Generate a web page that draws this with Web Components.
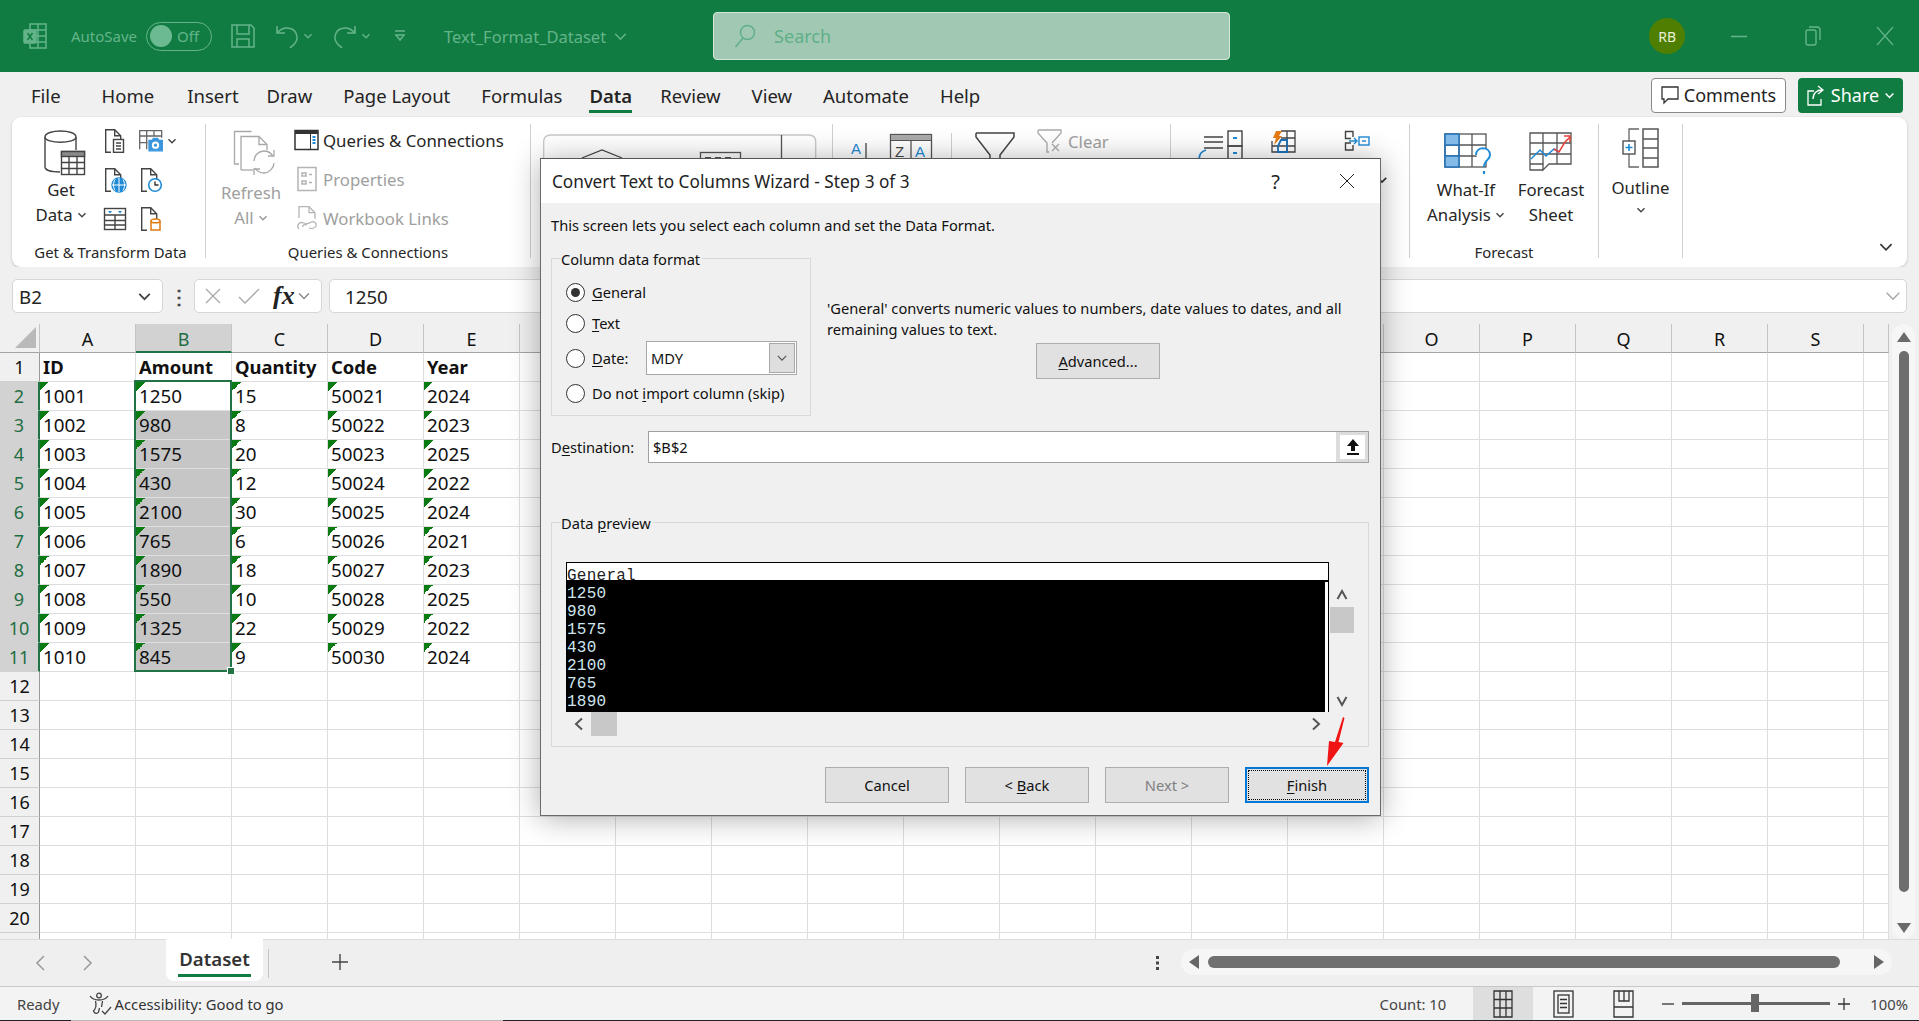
<!DOCTYPE html>
<html lang="en">
<head>
<meta charset="utf-8">
<title>Text_Format_Dataset - Excel</title>
<style>
  html, body { margin: 0; height: 100%; overflow: hidden; }
  body { font-family: "Noto Sans", "Open Sans", sans-serif; color: #242424; background: #f0f0f0; }
  #app { position: relative; display: flex; flex-direction: column; height: 1021px; width: 1919px; overflow: hidden; }
</style>
</head>
<body>
<div id="app">
  <xl-titlebar></xl-titlebar>
  <xl-tabs></xl-tabs>
  <xl-ribbon></xl-ribbon>
  <xl-formula-bar></xl-formula-bar>
  <xl-sheet></xl-sheet>
  <xl-sheet-tabs></xl-sheet-tabs>
  <xl-status-bar></xl-status-bar>
  <xl-wizard></xl-wizard>
</div>

<script>
// small helpers for the ribbon icons
const chev = (size = 10, color = '#444', sw = 1.4) =>
  `<svg width="${size}" height="${size}" viewBox="0 0 10 10" fill="none" stroke="${color}" stroke-width="${sw}"><path d="M1.5 3.2 5 6.8l3.5-3.6"/></svg>`;

const doc = (extra = '', stroke = '#444') =>
  `<svg width="26" height="26" viewBox="0 0 26 26" fill="none" stroke="${stroke}" stroke-width="1.4"><path d="M9 24.3H3.7V1.7h9l6 6v6"/><path d="M12.7 1.7v6h6"/>${extra}</svg>`;

const icons = {
  getData: `<svg style="margin-left:8px" width="42" height="46" viewBox="0 0 42 46" fill="none" stroke="#444" stroke-width="1.4">
    <path d="M1 7c0-8 31-8 31 0v13"/><path d="M1 7c0 7 31 7 31 0"/><path d="M1 7v30c0 3 6 5 15 5"/>
    <rect x="17.5" y="21.5" width="23" height="23" fill="#fff"/><rect x="17.5" y="21.5" width="23" height="5" fill="#8a8a8a"/>
    <path d="M17.5 32.5h23M17.5 38.5h23M25 26.5v18M33 26.5v18"/></svg>`,
  fromText: doc('<rect x="11.5" y="11.5" width="10" height="12.8" fill="#fff"/><path d="M14 15h5M14 18h5M14 21h5"/>'),
  fromPic: `<svg width="26" height="26" viewBox="0 0 26 26" fill="none" stroke="#666" stroke-width="1.3"><path d="M1.7 21.3V2.7h22v7M1.7 8h22M1.7 14.6h8M8.7 2.7v18.6M16 2.7v6"/><path d="M11 22.8V12.5h3l1.5-2h4l1.5 2h3.3v10.3z" fill="#3a96dd" stroke="#3a96dd"/><circle cx="17.5" cy="17.2" r="3" fill="#fff" stroke="#fff"/><circle cx="17.5" cy="17.2" r="1.6" fill="#3a96dd" stroke="none"/></svg>`,
  fromWeb: doc('<circle cx="17" cy="18" r="7" fill="#1f8ad6" stroke="#1f8ad6"/><path d="M10 18h14M17 11v14M13 12.5c-2 3.5-2 7.5 0 11M21 12.5c2 3.5 2 7.5 0 11" stroke="#fff" stroke-width="1"/>'),
  recent: doc('<circle cx="17" cy="18" r="6.3" fill="#fff" stroke="#1f8ad6" stroke-width="1.6"/><path d="M17 14.5V18h3.5" stroke="#333"/>'),
  fromTable: `<svg width="26" height="26" viewBox="0 0 26 26" fill="none" stroke="#444" stroke-width="1.4"><rect x="2.5" y="2.5" width="21" height="21" fill="#fff"/><path d="M2.5 9h21M2.5 14.5h21M2.5 19h21M13 9v14.5"/><path d="M6 5h4l-2 2.5zM16 5h4l-2 2.5z" fill="#1f8ad6" stroke="none"/></svg>`,
  existing: doc('<path d="M13 15c0-2.6 9-2.6 9 0v9h-9z" fill="#fff" stroke="#e07a10" stroke-width="1.5"/><path d="M13 15c0 2.4 9 2.4 9 0" stroke="#e07a10" stroke-width="1.5"/>'),
  refresh: `<svg style="margin:0 0 3px 8px" width="44" height="48" viewBox="0 0 44 48" fill="none" stroke="#a8a8a8" stroke-width="1.3"><path d="M6 34H1.5V1.5h17"/><path d="M8 40V6.5h18l8 8V20M26 6.5v8h8"/><path d="M8 40h12"/><path d="M21 31c0-6 5-10 10-10 4 0 7 2 9 5M41 33c0 5-5 10-10 10-4 0-7-2-9-5"/><path d="M41 20v6h-6M21 45v-6h6"/></svg>`,
  queries: `<svg width="26" height="26" viewBox="0 0 26 26"><rect x="1" y="3.5" width="23" height="19" fill="#fff" stroke="#333" stroke-width="1.5"/><rect x="1" y="3.5" width="23" height="3.5" fill="#333"/><path d="M16.5 7v15" stroke="#333" stroke-width="1"/><path d="M18.5 10h3M18.5 13h3M18.5 16h3" stroke="#1f8ad6" stroke-width="1.8"/></svg>`,
  props: `<svg width="26" height="26" viewBox="0 0 26 26" fill="none" stroke="#b4b4b4" stroke-width="1.5"><rect x="4" y="1.5" width="18" height="23"/><rect x="8" y="7" width="4" height="3"/><rect x="8" y="15" width="4" height="3"/><path d="M15 8.5h3M15 16.5h3"/></svg>`,
  links: `<svg width="26" height="26" viewBox="0 0 26 26" fill="none" stroke="#b4b4b4" stroke-width="1.3"><path d="M5 13V1.7h10l6 6v6"/><path d="M15 1.7v6h6"/><path d="M5 24c-3-3 0-8 5-6 3 1 6 0 7-1 3-1 6 1 5 4-1 2-4 3-7 2M9 22c-1-2 2-3 4-2"/></svg>`,
  gallery: `<svg width="274" height="30" viewBox="0 0 274 30" fill="none" stroke="#555" stroke-width="1.3"><path d="M.7 30V8q0-7 7-7h258q7 0 7 7v22" stroke="#c8c8c8"/><path d="M238.5 1v29" stroke="#555"/><path d="M39 24l20-8 20 8" stroke="#444"/><rect x="157.5" y="18.5" width="40" height="12"/><path d="M162 24h6M172 24h6M182 24h6" stroke-width="2"/></svg>`,
  sort: `<svg width="105" height="30" viewBox="0 0 105 30" fill="none"><text x="20" y="23" fill="#1f8ad6" font-size="15" font-family="Liberation Sans">A</text><path d="M35 12v18" stroke="#444" stroke-width="1.3"/><rect x="59.5" y="3.5" width="41" height="30" stroke="#555" stroke-width="1.3"/><rect x="59.5" y="3.5" width="41" height="6" fill="#aaa" stroke="#555"/><path d="M80 9.5v21" stroke="#555" stroke-width="1.3"/><text x="64" y="26" fill="#444" font-size="15" font-family="Liberation Sans">Z</text><text x="84" y="26" fill="#1f8ad6" font-size="15" font-family="Liberation Sans">A</text></svg>`,
  funnel: `<svg width="42" height="30" viewBox="0 0 42 30" fill="none" stroke="#444" stroke-width="1.5"><path d="M1 2h38v4L25 24v6M1 2v4l14 18v6"/></svg>`,
  clear: `<svg width="26" height="24" viewBox="0 0 26 24" fill="none" stroke="#aaa" stroke-width="1.3"><path d="M1 1h23v3l-9 10M1 1v3l9 10v9h2"/><path d="M15 15l7 7M22 15l-7 7"/></svg>`,
  flash: `<svg width="46" height="30" viewBox="0 0 46 30" fill="none" stroke="#444" stroke-width="1.4"><path d="M6 7h19M6 12h19M6 18h19"/><path d="M1 30c0-6 3-9 7-10" stroke="#1f8ad6" stroke-width="1.8"/><rect x="30" y="1" width="14" height="15"/><rect x="30" y="16" width="14" height="14"/><path d="M35 8h4M35 23h4" stroke="#1f8ad6" stroke-width="1.8"/></svg>`,
  fill: `<svg width="26" height="24" viewBox="0 0 26 24" fill="none" stroke="#444" stroke-width="1.3"><path d="M10 1h14v21H1V11M1 16h23M16 1v21M10 8h14"/><path d="M10 10h6v12H7v-6z" stroke="#1f72b8" stroke-width="1.8"/><path d="M5 1h6L8 6h3l-8 9 2-7H2z" fill="#e57a10" stroke="none"/></svg>`,
  relations: `<svg width="26" height="22" viewBox="0 0 26 22" fill="none" stroke="#444" stroke-width="1.4"><path d="M9 7V1.5H1.5v7H7M7 13H1.5v7H9v-5"/><path d="M5 11h8M10 8l3 3-3 3" stroke="#1f8ad6"/><rect x="15" y="7" width="10" height="8" stroke="#1f8ad6"/><path d="M18 11h4" stroke="#1f8ad6"/></svg>`,
  whatif: `<svg style="margin:3px 0 1px 6px" width="50" height="44" viewBox="0 0 50 44" fill="none" stroke="#555" stroke-width="1.3"><rect x="1" y="1" width="41" height="33" fill="#fff"/><path d="M15 1v33M28 1v33M1 12h41M1 23h41"/><rect x="1" y="1" width="14" height="11" fill="#84bbe6" stroke="#1f72b8" stroke-width="1.5"/><rect x="1" y="23" width="14" height="11" fill="#84bbe6" stroke="#1f72b8" stroke-width="1.5"/><path d="M1 12v11M15 12v11" stroke="#1f72b8" stroke-width="1.5"/><path d="M32 22c0-9 14-9 14 0 0 5-6 5-6 12" fill="#fff" stroke="#1f8ad6" stroke-width="2"/><path d="M40 38v3" stroke="#1f8ad6" stroke-width="2.2"/></svg>`,
  forecast: `<svg style="margin-top:2px" width="44" height="40" viewBox="0 0 44 40" fill="none" stroke="#555" stroke-width="1.3"><path d="M14 38H1V1h41v31H20l-6 6v-6H1"/><path d="M1 11h41M1 22h41M14 1v31M28 1v31"/><path d="M2 27l9-9 6 6 8-7 5 3" stroke="#1f8ad6" stroke-width="1.5"/><path d="M25 17l5 3 6-10 5-5" stroke="#e8403a" stroke-width="1.5"/><path d="M35 4h6v6" stroke="#e8403a" stroke-width="1.5"/></svg>`,
  outline: `<svg width="38" height="40" viewBox="0 0 38 40" fill="none" stroke="#666" stroke-width="1.3"><rect x="21" y="1" width="15" height="38" stroke-width="1.5" stroke="#555"/><path d="M21 11h15M21 20h15M21 30h15" stroke="#555"/><path d="M17 1H7v12M7 26v13h10"/><rect x="1" y="13" width="12" height="13" fill="#fff" stroke="#444"/><path d="M3.5 19.5h7M7 16v7" stroke="#1f8ad6" stroke-width="1.6"/></svg>`
};

class XlTitlebar extends HTMLElement {
  constructor() {
    super();
    this.attachShadow({ mode: 'open' });
    this.shadowRoot.innerHTML = `
      <style>
        :host { display: flex; align-items: center; height: 72px; flex: none; background: #107c41; color: #64b48b; }
        svg { display: block; flex: none; }
        .t { font-size: 15px; }
        .logo { margin-left: 23px; }
        .auto { margin-left: 24px; }
        .toggle { display: flex; align-items: center; gap: 5px; margin-left: 9px; width: 66px; height: 29px; box-sizing: border-box; border: 1px solid #64b48b; border-radius: 15px; padding-left: 3px; font-size: 15px; }
        .knob { width: 22px; height: 22px; border-radius: 50%; background: #6cba92; }
        .save { margin-left: 19px; }
        .file { display: flex; align-items: center; gap: 7px; margin-left: 37px; font-size: 16.5px; }
        .search { display: flex; align-items: center; gap: 18px; margin-left: 85px; width: 517px; height: 48px; box-sizing: border-box; padding-left: 20px; background: #a1c8b3; border: 1px solid #d6e6dc; border-radius: 4px; color: #5fb088; font-size: 18px; }
        .avatar { display: flex; align-items: center; justify-content: center; margin-left: 419px; width: 36px; height: 36px; border-radius: 50%; background: #4f7f00; color: #e9efd8; font-size: 14px; }
      </style>
      <svg class="logo" width="24" height="26" viewBox="0 0 24 26" fill="none" stroke="#64b48b" stroke-width="1.5"><path d="M7 7V1h16v24H7v-5M7 7h16M15 1v24M8 13h15M8 19h15"/><rect x="1" y="7" width="12" height="13" rx="1" fill="#64b48b"/><path d="M4.5 10l5 7M9.5 10l-5 7" stroke="#107c41"/></svg>
      <span class="t auto">AutoSave</span>
      <div class="toggle"><span class="knob"></span><span>Off</span></div>
      <svg class="save" width="24" height="24" viewBox="0 0 24 24" fill="none" stroke="#64b48b" stroke-width="1.5"><path d="M1 1h19l3 3v19H1zM6 1v9h12V1M6 23v-8h12v8"/></svg>
      <svg style="margin-left:20px" width="24" height="24" viewBox="0 0 24 24" fill="none" stroke="#64b48b" stroke-width="1.5"><path d="M2 9c7-8 19-6 20 4 .5 6-4 8-7 11M2 2v7h8"/></svg>
      <span style="margin-left:4px">${chev(10, '#64b48b')}</span>
      <svg style="margin-left:20px" width="24" height="24" viewBox="0 0 24 24" fill="none" stroke="#64b48b" stroke-width="1.5"><path d="M22 9C15 1 3 3 2 13c-.5 6 4 8 7 11M22 2v7h-8"/></svg>
      <span style="margin-left:4px">${chev(10, '#64b48b')}</span>
      <svg style="margin-left:22px" width="14" height="14" viewBox="0 0 14 14" fill="none" stroke="#64b48b" stroke-width="1.5"><path d="M2 2h10M3 6l4 5 4-5z"/></svg>
      <div class="file"><span>Text_Format_Dataset</span>${chev(15, '#64b48b', 1)}</div>
      <div class="search">
        <svg width="22" height="24" viewBox="0 0 22 24" fill="none" stroke="#5fb088" stroke-width="1.5"><circle cx="13.5" cy="8.5" r="7"/><path d="M9 14 1.5 23"/></svg>
        <span>Search</span>
      </div>
      <div class="avatar">RB</div>
      <svg style="margin-left:46px" width="16" height="3" viewBox="0 0 16 3" fill="none" stroke="#64b48b" stroke-width="1.5"><path d="M0 1.5h16"/></svg>
      <svg style="margin-left:58px" width="16" height="22" viewBox="0 0 16 22" fill="none" stroke="#64b48b" stroke-width="1.4"><rect x="1" y="5" width="10" height="15" rx="2"/><path d="M4 2h8q3 0 3 3v10"/></svg>
      <svg style="margin-left:55px" width="18" height="20" viewBox="0 0 18 20" fill="none" stroke="#64b48b" stroke-width="1.2"><path d="M1 1l16 18M17 1 1 19"/></svg>
    `;
  }
}

class XlTabs extends HTMLElement {
  constructor() {
    super();
    this.attachShadow({ mode: 'open' });
    // small per-tab nudges: the original's text widths are not quite those of this font
    const nudge = { Home: 'margin-left:1px;margin-right:2px', Draw: 'margin-left:-3px', Data: 'margin-left:-4px', Review: 'margin-left:-3px' };
    const names = ['File', 'Home', 'Insert', 'Draw', 'Page Layout', 'Formulas', 'Data', 'Review', 'View', 'Automate', 'Help'];
    this.shadowRoot.innerHTML = `
      <style>
        :host { display: flex; align-items: center; height: 45px; flex: none; background: #f0f0f0; padding: 0 16px 0 31px; box-sizing: border-box; font-size: 18.5px; color: #242424; }
        .tabs { display: flex; gap: 31px; flex: 1; }
        .tab { position: relative; line-height: 30px; padding-top: 2px; }
        .tab:first-child { margin-right: 9px; }
        .on { font-weight: 600; }
        .on::after { content: ""; position: absolute; left: 0; right: 0; bottom: -2px; height: 3px; background: #107c41; }
        .btn { display: flex; align-items: center; justify-content: center; gap: 5px; box-sizing: border-box; height: 35px; border-radius: 4px; font-size: 18px; margin-top: 1px; }
        .comments { width: 135px; background: #fff; border: 1px solid #8a8a8a; }
        .share { width: 105px; margin-left: 12px; background: #107c41; color: #fff; }
      </style>
      <div class="tabs">${names.map(n => `<span class="tab ${n === 'Data' ? 'on' : ''}" style="${nudge[n] || ''}">${n}</span>`).join('')}</div>
      <div class="btn comments"><svg width="18" height="20" viewBox="0 0 18 20" fill="none" stroke="#333" stroke-width="1.3"><path d="M1 2h16v12H7l-4 4v-4H1z"/></svg>Comments</div>
      <div class="btn share"><svg width="20" height="22" viewBox="0 0 20 22" fill="none" stroke="#fff" stroke-width="1.3"><path d="M8 7H2v14h13v-6M7 15c0-6 4-9 9-9M12 2l5 4-5 4"/></svg>Share ${chev(11, '#fff')}</div>
    `;
  }
}

class XlRibbon extends HTMLElement {
  constructor() {
    super();
    this.attachShadow({ mode: 'open' });
    this.shadowRoot.innerHTML = `
      <style>
        :host { display: flex; height: 150px; flex: none; margin: 0 12px; box-sizing: border-box; padding-top: 7px; background: #fff; border-radius: 9px; box-shadow: 0 1px 3px rgba(0,0,0,.2); font-size: 16.8px; color: #262626; }
        svg { display: block; flex: none; }
        .group { display: flex; flex-direction: column; height: 134px; box-sizing: border-box; border-right: 1px solid #d0d0d0; flex: none; }
        .body { display: flex; flex: 1; min-height: 0; }
        .label { text-align: center; font-size: 14.9px; line-height: 20px; margin-bottom: -4px; margin-top: -1px; }
        .big { display: flex; flex-direction: column; align-items: center; padding-top: 6px; line-height: 24.5px; text-align: center; flex: none; }
        .line { display: flex; align-items: center; gap: 4px; justify-content: center; white-space: nowrap; }
        .off { color: #a0a0a0; }
        .smallgrid { display: grid; grid-auto-rows: 39px; align-items: center; margin-top: -3.5px; }
        .item { display: flex; align-items: center; gap: 3px; white-space: nowrap; }
      </style>
      <div class="group" style="width:194px">
        <div class="body">
          <div class="big" style="width:58px;margin-left:20px">${icons.getData}<span style="margin-top:2px">Get</span><span class="line">Data ${chev()}</span></div>
          <div class="smallgrid" style="grid-template-columns:36px auto;margin-left:12px;margin-top:-2.5px">
            <span>${icons.fromText}</span><span class="item">${icons.fromPic}${chev()}</span>
            <span>${icons.fromWeb}</span><span>${icons.recent}</span>
            <span>${icons.fromTable}</span><span>${icons.existing}</span>
          </div>
        </div>
        <div class="label" style="padding-left:4px">Get &amp; Transform Data</div>
      </div>
      <div class="group" style="width:325px">
        <div class="body">
          <div class="big off" style="width:58px;margin-left:16px">${icons.refresh}<span>Refresh</span><span class="line">All ${chev(10, '#999')}</span></div>
          <div class="smallgrid" style="margin-left:14px">
            <span class="item">${icons.queries}Queries &amp; Connections</span>
            <span class="item off">${icons.props}Properties</span>
            <span class="item off">${icons.links}Workbook Links</span>
          </div>
        </div>
        <div class="label">Queries &amp; Connections</div>
      </div>
      <div class="group" style="width:302px;padding:10px 0 0 12px">${icons.gallery}</div>
      <div class="group" style="width:338px;padding-top:7px">
        <div class="body">
          <span style="margin-left:-2px">${icons.sort}</span>
          <span style="margin:2px 0 0 15px;height:30px;border-left:1px solid #d0d0d0"></span>
          <span style="margin-left:23px">${icons.funnel}</span>
          <span class="item off" style="margin-left:20px;height:20px;gap:5px">${icons.clear}Clear</span>
        </div>
      </div>
      <div class="group" style="width:239px;padding:6px 0 0 27px">
        <div class="body" style="gap:27px">
          <span>${icons.flash}</span><span>${icons.fill}</span><span style="margin-left:20px">${icons.relations}</span>
        </div>
        <div style="margin:0 0 72px 178px">${chev(12, '#333')}</div>
      </div>
      <div class="group" style="width:189px">
        <div class="body">
          <div class="big" style="width:72px;margin-left:20px">${icons.whatif}<span>What-If</span><span class="line">Analysis ${chev()}</span></div>
          <div class="big" style="width:72px;margin-left:13px">${icons.forecast}<span style="margin-top:6px">Forecast</span><span>Sheet</span></div>
        </div>
        <div class="label">Forecast</div>
      </div>
      <div class="group" style="width:84px">
        <div class="big" style="padding-top:4px">${icons.outline}<span style="margin-top:8px">Outline</span><span style="margin-top:4px">${chev()}</span></div>
      </div>
      <div style="flex:1;display:flex;justify-content:flex-end;align-items:flex-end;padding:0 13px 12px 0">${chev(16, '#333', 1)}</div>
    `;
  }
}

class XlFormulaBar extends HTMLElement {
  constructor() {
    super();
    this.attachShadow({ mode: 'open' });
    this.shadowRoot.innerHTML = `
      <style>
        :host { display: flex; height: 57px; flex: none; box-sizing: border-box; padding: 12px 12px 11px 12px; background: #f0f0f0; font-size: 18.7px; }
        .box { display: flex; align-items: center; box-sizing: border-box; background: #fff; border: 1px solid #d6d6d6; border-radius: 5px; height: 34px; }
        .name { width: 151px; padding: 0 10px 0 6px; justify-content: space-between; }
        .dots { width: 31px; display: flex; align-items: center; justify-content: center; font-weight: 700; font-size: 20px; color: #444; }
        .fn { width: 128px; padding-left: 8px; }
        .fx { font-family: "Liberation Serif", serif; font-style: italic; font-weight: 700; font-size: 26px; line-height: 30px; color: #222; margin: 0 2px 0 13px; }
        .input { flex: 1; margin-left: 7px; padding: 0 4px 0 15px; justify-content: space-between; }
      </style>
      <div class="box name"><span>B2</span>${chev(15, '#444', 1.2)}</div>
      <div class="dots">⋮</div>
      <div class="box fn">
        <svg width="20" height="18" viewBox="0 0 18 18" fill="none" stroke="#a8a8a8" stroke-width="1.3"><path d="M2 2l14 14M16 2 2 16"/></svg>
        <svg style="margin-left:15px" width="22" height="18" viewBox="0 0 22 18" fill="none" stroke="#a8a8a8" stroke-width="1.3"><path d="M1 10l6 6L21 2"/></svg>
        <span class="fx">fx</span>${chev(14, '#888', 1)}
      </div>
      <div class="box input"><span>1250</span>${chev(18, '#a8a8a8', .8)}</div>
    `;
  }
}

class XlSheet extends HTMLElement {
  constructor() {
    super();
    this.attachShadow({ mode: 'open' });
    const cols = 'ABCDEFGHIJKLMNOPQRS'.split('');
    const underDialog = 'FGHIJKLMN'; // these letters sit behind the wizard, so they are never seen
    const heads = ['ID', 'Amount', 'Quantity', 'Code', 'Year'];
    const amount = [1250, 980, 1575, 430, 2100, 765, 1890, 550, 1325, 845];
    const qty = [15, 8, 20, 12, 30, 6, 18, 10, 22, 9];
    const year = [2024, 2023, 2025, 2022, 2024, 2021, 2023, 2025, 2022, 2024];
    let html = `<div class="ch corner"><i></i></div>`;
    cols.forEach(c => { html += `<div class="ch ${c === 'B' ? 'sel' : ''}">${underDialog.includes(c) ? '' : c}</div>`; });
    html += `<div class="ch"></div>`;
    for (let r = 1; r <= 21; r++) {
      const data = r >= 2 && r <= 11;
      html += `<div class="rh ${data ? 'sel' : ''}">${r <= 20 ? r : ''}</div>`;
      for (let c = 0; c < 20; c++) {
        let val = '', cls = 'c';
        if (r === 1 && c < 5) { val = heads[c]; cls += ' b'; }
        if (data && c < 5) {
          const i = r - 2;
          val = [1001 + i, amount[i], qty[i], 50021 + i, year[i]][c];
          cls += ' tri';
          if (c === 1 && r > 2) cls += ' fill';
        }
        html += `<div class="${cls}">${val}</div>`;
      }
    }
    this.shadowRoot.innerHTML = `
      <style>
        :host { display: flex; flex: 1; min-height: 0; background: #fff; position: relative; }
        .grid { display: grid; grid-template-columns: 40px repeat(19, 96px) 25px; grid-template-rows: 29px; grid-auto-rows: 29px; width: 1889px; overflow: hidden; position: relative; font-size: 18.8px; color: #111; align-content: start; }
        .grid > div { box-sizing: border-box; line-height: 28px; white-space: nowrap; }
        .grid > .ch { line-height: 30px; }
        .ch { background: #f0f0f0; border-right: 1px solid #c4c4c4; border-bottom: 1px solid #a4a4a4; text-align: center; font-size: 18px; }
        .ch.sel { background: #d2d2d2; color: #1f6e43; border-bottom: 2px solid #217346; }
        .corner { position: relative; }
        .corner i { position: absolute; left: 15px; top: 3px; width: 0; height: 0; border-style: solid; border-width: 0 0 21px 21px; border-color: transparent transparent #b9b9b9 transparent; }
        .rh { background: #f0f0f0; border-right: 1px solid #9a9a9a; border-bottom: 1px solid #d0d0d0; text-align: center; font-size: 18px; }
        .rh.sel { background: #d2d2d2; color: #1f6e43; border-right: 2px solid #217346; }
        .c { border-right: 1px solid #dedede; border-bottom: 1px solid #dedede; padding-left: 3px; overflow: hidden; }
        .b { font-weight: 700; font-size: 18.4px; }
        .tri { background: linear-gradient(135deg, #0a7a12 50%, transparent 50%) 0 0 / 9px 9px no-repeat; }
        .tri.fill { background: linear-gradient(135deg, #0a7a12 50%, transparent 50%) 0 0 / 9px 9px no-repeat, #c6c6c6; }
        .selection { position: absolute; left: 134px; top: 56px; width: 98px; height: 292px; box-sizing: border-box; border: 2px solid #217346; pointer-events: none; }
        .selection::after { content: ""; position: absolute; right: -5px; bottom: -5px; width: 6px; height: 6px; background: #217346; border: 1px solid #fff; }
        .vbar { flex: 1; display: flex; flex-direction: column; align-items: center; background: #f0f0f0; padding: 0 4px 0 3px; box-sizing: border-box; }
        .track { width: 100%; height: 100%; display: flex; flex-direction: column; align-items: center; background: #f6f6f6; border-radius: 12px; padding: 8px 0 4px; box-sizing: border-box; }
        .thumb { width: 10px; height: 541px; background: #6e6e6e; border-radius: 5px; margin: 9px 0 31px; }
      </style>
      <div class="grid">${html}<div class="selection"></div></div>
      <div class="vbar"><div class="track">
        <svg width="14" height="10" viewBox="0 0 14 10"><path d="M7 0l7 10H0z" fill="#6a6a6a"/></svg>
        <div class="thumb"></div>
        <svg width="14" height="10" viewBox="0 0 14 10"><path d="M7 10 14 0H0z" fill="#6a6a6a"/></svg>
      </div></div>
    `;
  }
}

class XlSheetTabs extends HTMLElement {
  constructor() {
    super();
    this.attachShadow({ mode: 'open' });
    this.shadowRoot.innerHTML = `
      <style>
        :host { display: flex; align-items: flex-start; height: 48px; flex: none; box-sizing: border-box; background: #efefef; border-bottom: 1px solid #c8c8c8; border-top: 1px solid #dcdcdc; }
        svg { display: block; flex: none; }
        .tab { margin-left: 72px; margin-top: -1px; width: 97px; height: 42px; box-sizing: border-box; background: #fff; border-radius: 0 0 8px 8px; display: flex; flex-direction: column; align-items: center; font-size: 18.6px; font-weight: 600; color: #333; }
        .tab span { border-bottom: 3px solid #107c41; height: 35px; box-sizing: content-box; padding: 0 1px; line-height: 40px; }
        .sep { width: 1px; height: 29px; background: #c4c4c4; margin: 9px 0 0 5px; }
        .bar { display: flex; align-items: center; margin: 9px 0 0 21px; width: 711px; height: 26px; background: #f6f6f6; border-radius: 13px; box-sizing: border-box; padding: 0 8px; }
        .hthumb { width: 633px; height: 12px; border-radius: 6px; background: #707070; margin: 0 34px 0 9px; }
        .dots { margin: 13px 0 0 806px; }
      </style>
      <svg style="margin:13px 0 0 34px" width="12" height="20" viewBox="0 0 12 20" fill="none" stroke="#9a9a9a" stroke-width="1.5"><path d="M10 3 3 10l7 7"/></svg>
      <svg style="margin:13px 0 0 36px" width="12" height="20" viewBox="0 0 12 20" fill="none" stroke="#9a9a9a" stroke-width="1.5"><path d="M2 3l7 7-7 7"/></svg>
      <div class="tab"><span>Dataset</span></div>
      <div class="sep"></div>
      <svg style="margin:13px 0 0 62px" width="18" height="18" viewBox="0 0 18 18" fill="none" stroke="#444" stroke-width="1.4"><path d="M9 1v16M1 9h16"/></svg>
      <svg class="dots" width="5" height="18" viewBox="0 0 5 18" fill="#444"><rect x="1" y="3" width="3" height="3"/><rect x="1" y="8.5" width="3" height="3"/><rect x="1" y="14" width="3" height="3"/></svg>
      <div class="bar">
        <svg width="10" height="14" viewBox="0 0 10 14"><path d="M0 7l10-7v14z" fill="#666"/></svg>
        <div class="hthumb"></div>
        <svg width="10" height="14" viewBox="0 0 10 14"><path d="M10 7 0 0v14z" fill="#666"/></svg>
      </div>
    `;
  }
}

class XlStatusBar extends HTMLElement {
  constructor() {
    super();
    this.attachShadow({ mode: 'open' });
    this.shadowRoot.innerHTML = `
      <style>
        :host { display: flex; align-items: center; height: 34px; flex: none; box-sizing: border-box; background: #f3f3f3; border-bottom: 1px solid; border-image: linear-gradient(90deg, #22222e 72px, #b8b8b8 72px, #b8b8b8 503px, #22222e 503px) 1; font-size: 14.8px; color: #444; padding-left: 17px; }
        svg { display: block; flex: none; }
        .acc { display: flex; align-items: center; gap: 2px; margin-left: 29px; color: #333; }
        .count { margin-left: 1096px; color: #444; }
        .view { display: flex; align-items: center; justify-content: center; width: 60px; height: 33px; }
        .view.on { background: #dedede; margin-left: 27px; }
        .slider { width: 148px; height: 3px; background: #666; position: relative; margin: 0 8px; }
        .slider i { position: absolute; left: 69px; top: -8px; width: 8px; height: 18px; background: #666; }
      </style>
      <span>Ready</span>
      <div class="acc">
        <svg width="24" height="24" viewBox="0 0 24 24" fill="none" stroke="#444" stroke-width="1.3"><circle cx="10" cy="3.5" r="2.3"/><path d="M1 4c2 3 5 4 9 4s7-1 9-4M6.5 9c1 4 0 8-2 10 1 3 4 3 5 1l1-4M13.5 9l-1 6"/><path d="M13 19l3 3 6-7"/></svg>
        <span>Accessibility: Good to go</span>
      </div>
      <span class="count">Count: 10</span>
      <div class="view on"><svg width="20" height="28" viewBox="0 0 20 28" fill="none" stroke="#333" stroke-width="1.3"><path d="M1 1h18v26H1zM1 9.5h18M1 18h18M7 1v26M13 1v26"/></svg></div>
      <div class="view"><svg width="21" height="28" viewBox="0 0 21 28" fill="none" stroke="#333" stroke-width="1.3"><rect x="1" y="1" width="19" height="26"/><rect x="5" y="5" width="11" height="18"/><path d="M7 9.5h7M7 13.5h7M7 17.5h7"/></svg></div>
      <div class="view"><svg width="21" height="28" viewBox="0 0 21 28" fill="none" stroke="#333" stroke-width="1.3"><path d="M1 1h19v26H1zM1 17h19M6 1v10h5V1M11 11h5V1"/></svg></div>
      <svg style="margin-left:9px" width="12" height="12" viewBox="0 0 12 12" stroke="#333" stroke-width="1.3"><path d="M0 6h12"/></svg>
      <div class="slider"><i></i></div>
      <svg width="12" height="12" viewBox="0 0 12 12" stroke="#333" stroke-width="1.3"><path d="M0 6h12M6 0v12"/></svg>
      <span style="margin-left:20px">100%</span>
    `;
  }
}

class XlFieldset extends HTMLElement {
  constructor() {
    super();
    this.attachShadow({ mode: 'open' });
    this.shadowRoot.innerHTML = `
      <style>
        :host { display: block; box-sizing: border-box; border: 1px solid #d9d9d9; flex: none; }
        .legend { display: block; width: fit-content; height: 20px; margin: -10px 0 -10px 9px; padding-right: 2px; background: #f0f0f0; line-height: 20px; position: relative; }
      </style>
      <span class="legend"><slot name="legend"></slot></span>
      <slot></slot>
    `;
  }
}
customElements.define('xl-fieldset', XlFieldset);

class XlRadio extends HTMLElement {
  constructor() {
    super();
    this.attachShadow({ mode: 'open' });
    this.shadowRoot.innerHTML = `
      <style>
        :host { display: flex; align-items: center; gap: 7px; }
        .dot { width: 19px; height: 19px; box-sizing: border-box; border: 1px solid #333; border-radius: 50%; background: #fff; display: flex; align-items: center; justify-content: center; flex: none; }
        :host([checked]) .dot::after { content: ""; width: 9px; height: 9px; border-radius: 50%; background: #333; }
      </style>
      <span class="dot"></span><slot></slot>
    `;
  }
}
customElements.define('xl-radio', XlRadio);

class XlWizard extends HTMLElement {
  constructor() {
    super();
    this.attachShadow({ mode: 'open' });
    this.shadowRoot.innerHTML = `
      <style>
        /* the dialog floats over the sheet */
        :host { position: absolute; left: 540px; top: 158px; width: 841px; height: 658px; box-sizing: border-box; display: flex; flex-direction: column; background: #f0f0f0; border: 1px solid #6a6a6a; border-top-color: #555; box-shadow: 0 2px 28px rgba(0,0,0,.32); font-size: 14.65px; color: #111; }
        svg { display: block; flex: none; }
        u { text-underline-offset: 2px; }
        .title { display: flex; align-items: center; height: 44px; flex: none; background: #fff; padding-left: 11px; font-size: 17.2px; color: #222; }
        .title .help { margin-left: auto; font-size: 20px; }
        .title svg { margin: 0 23px 0 57px; }
        .body { padding: 0 11px 0 10px; }
        .intro { line-height: 20px; margin-top: 12px; }
        .format { display: flex; margin-top: 23px; }
        .opts { display: flex; flex-direction: column; padding: 17.5px 13px 0 14px; height: 156px; box-sizing: border-box; }
        .opts xl-radio { height: 31px; }
        .opts xl-radio.date { height: 39px; }
        .select { display: flex; margin-left: auto; width: 151px; height: 34px; box-sizing: border-box; background: #fff; border: 1px solid #a8a8a8; padding: 1px; align-items: center; }
        .select span { flex: 1; padding-left: 3px; }
        .select b { display: flex; align-items: center; justify-content: center; width: 26px; height: 100%; background: #dedede; border: 1px solid #a8a8a8; box-sizing: border-box; }
        .desc { margin-left: 16px; padding-top: 40px; line-height: 21px; white-space: nowrap; }
        button { font: inherit; color: inherit; display: block; width: 124px; height: 36px; box-sizing: border-box; background: #e1e1e1; border: 1px solid #adadad; padding: 0; }
        .adv { margin: 3px 0 0 225px; }
        .dest { display: flex; align-items: center; margin-top: 15px; }
        .dest > span { width: 97px; flex: none; }
        .dest .in { flex: 1; display: flex; align-items: center; height: 32px; box-sizing: border-box; background: #fff; border: 1px solid #a0a0a0; padding-left: 4px; }
        .dest .in span { flex: 1; }
        .dest .pick { width: 32px; height: 100%; background: #fff; border: 3px solid #dcdcdc; border-left-width: 4px; display: flex; align-items: center; justify-content: center; box-sizing: border-box; }
        .prev { margin-top: 59px; height: 225px; }
        .prev .wrap { padding: 39px 0 0 14px; display: grid; grid-template-columns: 763px 24px; }
        .box { box-sizing: border-box; width: 763px; height: 150px; display: flex; flex-direction: column; border: 1px solid #000; border-bottom: none; background: #fff; font-family: "Liberation Mono", monospace; font-size: 16px; letter-spacing: .25px; }
        .head { height: 19px; flex: none; overflow: hidden; line-height: 27px; border-bottom: 2px solid #000; box-sizing: border-box; color: #222; }
        .rows { flex: 1; margin-right: 3px; background: #000; color: #cfe6ee; line-height: 18px; padding-top: 3px; overflow: hidden; }
        .rows div { height: 18px; }
        .vs { display: flex; flex-direction: column; align-items: center; padding: 26px 0 4px 2px; box-sizing: border-box; height: 150px; }
        .vs i { width: 24px; height: 26px; background: #c8c8c8; margin: 5px 0; }
        .vs svg:last-child { margin-top: auto; }
        .hs { display: flex; align-items: center; height: 24px; padding-left: 8px; grid-column: 1; }
        .hs i { width: 26px; height: 24px; background: #c8c8c8; margin-left: 7px; }
        .hs svg:last-child { margin: 0 8px 0 auto; }
        .actions { display: flex; justify-content: flex-end; gap: 16px; margin-top: 20px; }
        .next { color: #808080; }
        .finish { position: relative; border: 2px solid #0078d7; }
        .finish::after { content: ""; position: absolute; inset: 1px; border: 1px dotted #000; }
        .arrow { position: absolute; left: 784px; top: 558px; }
      </style>
      <div class="title">
        <span>Convert Text to Columns Wizard - Step 3 of 3</span>
        <span class="help">?</span>
        <svg width="20" height="20" viewBox="0 0 20 20" fill="none" stroke="#222" stroke-width="1"><path d="M3 3l14 14M17 3 3 17"/></svg>
      </div>
      <div class="body">
        <div class="intro">This screen lets you select each column and set the Data Format.</div>
        <div class="format">
          <xl-fieldset style="width:260px;height:158px">
            <span slot="legend">Column data format</span>
            <div class="opts">
              <xl-radio checked><span><u>G</u>eneral</span></xl-radio>
              <xl-radio><span><u>T</u>ext</span></xl-radio>
              <xl-radio class="date"><span><u>D</u>ate:</span>
                <div class="select"><span>MDY</span><b>${chev(12, '#555', 1)}</b></div>
              </xl-radio>
              <xl-radio><span>Do not <u>i</u>mport column (skip)</span></xl-radio>
            </div>
          </xl-fieldset>
          <div>
            <div class="desc">'General' converts numeric values to numbers, date values to dates, and all<br>remaining values to text.</div>
            <button class="adv"><u>A</u>dvanced...</button>
          </div>
        </div>
        <div class="dest">
          <span>D<u>e</u>stination:</span>
          <div class="in"><span>$B$2</span>
            <div class="pick"><svg width="14" height="16" viewBox="0 0 14 16" fill="#111"><path d="M7 0l6 7H9v5H5V7H1zM1 14h12v2H1z"/></svg></div>
          </div>
        </div>
        <xl-fieldset class="prev">
          <span slot="legend">Data <u>p</u>review</span>
          <div class="wrap">
            <div class="box">
              <div class="head">General</div>
              <div class="rows"><div>1250</div><div>980</div><div>1575</div><div>430</div><div>2100</div><div>765</div><div>1890</div></div>
            </div>
            <div class="vs">
              <svg width="12" height="14" viewBox="0 0 12 14" fill="none" stroke="#555" stroke-width="2"><path d="M1.5 11 6 3l4.5 8"/></svg>
              <i></i>
              <svg width="12" height="14" viewBox="0 0 12 14" fill="none" stroke="#555" stroke-width="2"><path d="M1.5 3 6 11l4.5-8"/></svg>
            </div>
            <div class="hs">
              <svg width="10" height="14" viewBox="0 0 10 14" fill="none" stroke="#555" stroke-width="2"><path d="M8 1.5 2 7l6 5.5"/></svg>
              <i></i>
              <svg width="10" height="14" viewBox="0 0 10 14" fill="none" stroke="#555" stroke-width="2"><path d="M2 1.5 8 7l-6 5.5"/></svg>
            </div>
          </div>
        </xl-fieldset>
        <div class="actions">
          <button>Cancel</button>
          <button>&lt; <u>B</u>ack</button>
          <button class="next">Next &gt;</button>
          <button class="finish"><u>F</u>inish</button>
        </div>
      </div>
      <svg class="arrow" width="20" height="50" viewBox="0 0 20 50"><path d="M18 0l1.5 1-6 24 5 1L2 49l2-25 6 1z" fill="#f01414"/></svg>
    `;
  }
}

customElements.define('xl-titlebar', XlTitlebar);
customElements.define('xl-tabs', XlTabs);
customElements.define('xl-ribbon', XlRibbon);
customElements.define('xl-formula-bar', XlFormulaBar);
customElements.define('xl-sheet', XlSheet);
customElements.define('xl-sheet-tabs', XlSheetTabs);
customElements.define('xl-status-bar', XlStatusBar);
customElements.define('xl-wizard', XlWizard);
</script>
</body>
</html>
